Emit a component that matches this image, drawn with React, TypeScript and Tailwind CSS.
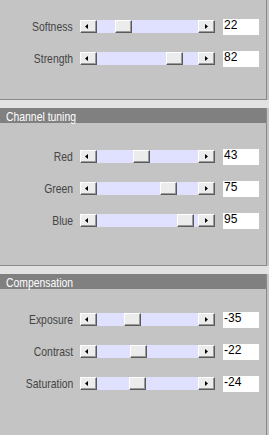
import React from "react";

const FONT = "font-['Liberation_Sans',Arial,sans-serif]";

function Arrow({ dir }: { dir: "left" | "right" }) {
  return (
    <svg width="3" height="5" viewBox="0 0 3 5" className="block">
      {dir === "left" ? (
        <polygon points="3,0 3,5 0,2.5" fill="#000" />
      ) : (
        <polygon points="0,0 0,5 3,2.5" fill="#000" />
      )}
    </svg>
  );
}

function Btn({ dir }: { dir: "left" | "right" }) {
  return (
    <div
      className={`w-[17px] h-[13px] bg-[#ececec] border-t border-l border-t-white border-l-white border-r border-b border-r-[#5a5a5a] border-b-[#5a5a5a] shadow-[inset_-1px_-1px_0_#9a9a9a] flex items-center ${
        dir === "left" ? "pl-[4px]" : "pl-[6px]"
      }`}
    >
      <Arrow dir={dir} />
    </div>
  );
}

function Slider({ value, min, max }: { value: number; min: number; max: number }) {
  const pos = Math.round(((value - min) / (max - min)) * 84);
  return (
    <div className="flex mt-px h-[13px]">
      <Btn dir="left" />
      <div className="relative w-[101px] h-[13px] bg-[#e0e0ff]">
        <div
          className="absolute top-0 w-[17px] h-[13px] bg-[#ececec] border-t border-l border-t-white border-l-white border-r border-b border-r-[#5a5a5a] border-b-[#5a5a5a] shadow-[inset_-1px_-1px_0_#9a9a9a]"
          style={{ left: pos }}
        />
      </div>
      <Btn dir="right" />
    </div>
  );
}

function Row({ label, value, min = 0, max = 100 }: { label: string; value: number; min?: number; max?: number }) {
  return (
    <div className="flex items-start h-4">
      <div className={`w-[73px] flex justify-end text-[13px] leading-4 text-[#444444] ${FONT}`}>
        <span className="inline-block whitespace-nowrap origin-right scale-x-[0.8]">{label}</span>
      </div>
      <div className="ml-[7px]">
        <Slider value={value} min={min} max={max} />
      </div>
      <div className={`ml-[8px] w-[36px] h-4 bg-white pl-[1px] text-[12px] leading-[12px] text-black ${FONT}`}>
        {value}
      </div>
    </div>
  );
}

function Header({ title }: { title: string }) {
  return (
    <div className={`h-[15px] bg-[#808080] text-white text-[13px] leading-[15px] pl-[6px] pt-px ${FONT}`}>
      <span className="inline-block whitespace-nowrap origin-left scale-x-[0.8]">{title}</span>
    </div>
  );
}

export default function App() {
  return (
    <div className="w-[269px] h-[435px] bg-[#c4c4c4] overflow-hidden flex flex-col">
      <div className="w-[267px] h-[100px] border-r border-b border-[#8a8a8a] pt-[19px] flex flex-col gap-4 shrink-0">
        <Row label="Softness" value={22} />
        <Row label="Strength" value={82} />
      </div>
      <div className="h-[8px] bg-[#e2e2e2] shrink-0" />
      <div className="w-[267px] h-[158px] border-r border-b border-[#8a8a8a] shrink-0 flex flex-col">
        <Header title="Channel tuning" />
        <div className="pt-[26px] flex flex-col gap-4">
          <Row label="Red" value={43} />
          <Row label="Green" value={75} />
          <Row label="Blue" value={95} />
        </div>
      </div>
      <div className="h-[8px] bg-[#e2e2e2] shrink-0" />
      <div className="w-[267px] flex-1 border-r border-[#8a8a8a] flex flex-col">
        <Header title="Compensation" />
        <div className="pt-[23px] flex flex-col gap-4">
          <Row label="Exposure" value={-35} min={-100} max={100} />
          <Row label="Contrast" value={-22} min={-100} max={100} />
          <Row label="Saturation" value={-24} min={-100} max={100} />
        </div>
      </div>
    </div>
  );
}
